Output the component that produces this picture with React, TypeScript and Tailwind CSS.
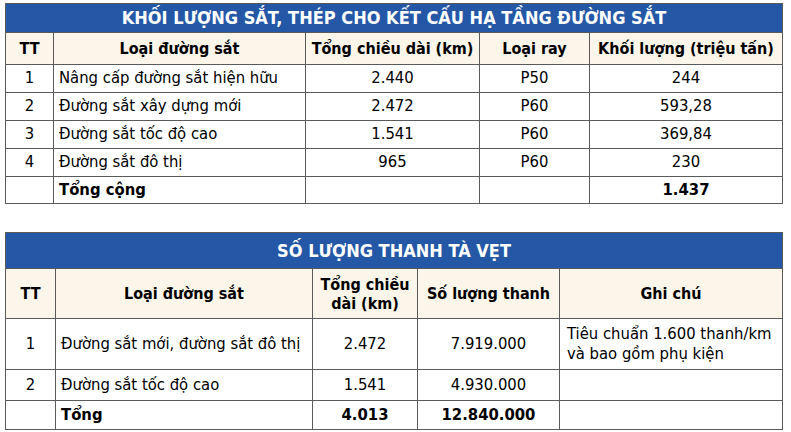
import React from "react";

const cell = "border border-[#5a5a5a] px-[5px] py-0 align-middle";

export default function App() {
  const t1 = [
    ["1", "Nâng cấp đường sắt hiện hữu", "2.440", "P50", "244"],
    ["2", "Đường sắt xây dựng mới", "2.472", "P60", "593,28"],
    ["3", "Đường sắt tốc độ cao", "1.541", "P60", "369,84"],
    ["4", "Đường sắt đô thị", "965", "P60", "230"],
  ];
  return (
    <div className="w-[791px] h-[432px] bg-white pt-[3px] pl-[5px] font-['DejaVu_Sans_Condensed','DejaVu_Sans',sans-serif] font-stretch-condensed text-black text-[16.5px] leading-none">
      <table className="table-fixed border-collapse w-[777px]">
        <colgroup>
          <col className="w-[48px]" />
          <col className="w-[252px]" />
          <col className="w-[174px]" />
          <col className="w-[110px]" />
          <col className="w-[193px]" />
        </colgroup>
        <tbody>
          <tr className="h-[29px]">
            <td colSpan={5} className="border border-[#5a5a5a] bg-[#2458a7] text-white font-bold text-[18px] text-center align-middle">
              KHỐI LƯỢNG SẮT, THÉP CHO KẾT CẤU HẠ TẦNG ĐƯỜNG SẮT
            </td>
          </tr>
          <tr className="h-[32px] bg-[#fbf6e9] font-bold text-[16px] text-center">
            <td className={cell}>TT</td>
            <td className={cell}>Loại đường sắt</td>
            <td className={cell}>Tổng chiều dài (km)</td>
            <td className={cell}>Loại ray</td>
            <td className={`${cell} px-[2px]`}>Khối lượng (triệu tấn)</td>
          </tr>
          {t1.map((r) => (
            <tr key={r[0]} className="h-[28px]">
              <td className={`${cell} text-center`}>{r[0]}</td>
              <td className={cell}>{r[1]}</td>
              <td className={`${cell} text-center`}>{r[2]}</td>
              <td className={`${cell} text-center`}>{r[3]}</td>
              <td className={`${cell} text-center`}>{r[4]}</td>
            </tr>
          ))}
          <tr className="h-[27px] font-bold">
            <td className={cell}></td>
            <td className={cell}>Tổng cộng</td>
            <td className={cell}></td>
            <td className={cell}></td>
            <td className={`${cell} text-center`}>1.437</td>
          </tr>
        </tbody>
      </table>

      <table className="table-fixed border-collapse w-[777px] mt-[28px]">
        <colgroup>
          <col className="w-[50px]" />
          <col className="w-[257px]" />
          <col className="w-[105px]" />
          <col className="w-[142px]" />
          <col className="w-[223px]" />
        </colgroup>
        <tbody>
          <tr className="h-[36px]">
            <td colSpan={5} className="border border-[#5a5a5a] bg-[#2458a7] text-white font-bold text-[18px] text-center align-middle">
              SỐ LƯỢNG THANH TÀ VẸT
            </td>
          </tr>
          <tr className="h-[50px] bg-[#fbf6e9] font-bold text-[16px] text-center">
            <td className={cell}>TT</td>
            <td className={cell}>Loại đường sắt</td>
            <td className={`${cell} leading-[19px]`}>
              Tổng chiều
              <br />
              dài (km)
            </td>
            <td className={cell}>Số lượng thanh</td>
            <td className={cell}>Ghi chú</td>
          </tr>
          <tr className="h-[51px]">
            <td className={`${cell} text-center`}>1</td>
            <td className={cell}>Đường sắt mới, đường sắt đô thị</td>
            <td className={`${cell} text-center`}>2.472</td>
            <td className={`${cell} text-center`}>7.919.000</td>
            <td className={`${cell} pl-[7px] leading-[20px]`}>
              Tiêu chuẩn 1.600 thanh/km
              <br />
              và bao gồm phụ kiện
            </td>
          </tr>
          <tr className="h-[31px]">
            <td className={`${cell} text-center`}>2</td>
            <td className={cell}>Đường sắt tốc độ cao</td>
            <td className={`${cell} text-center`}>1.541</td>
            <td className={`${cell} text-center`}>4.930.000</td>
            <td className={cell}></td>
          </tr>
          <tr className="h-[29px] font-bold">
            <td className={cell}></td>
            <td className={cell}>Tổng</td>
            <td className={`${cell} text-center`}>4.013</td>
            <td className={`${cell} text-center`}>12.840.000</td>
            <td className={cell}></td>
          </tr>
        </tbody>
      </table>
    </div>
  );
}
